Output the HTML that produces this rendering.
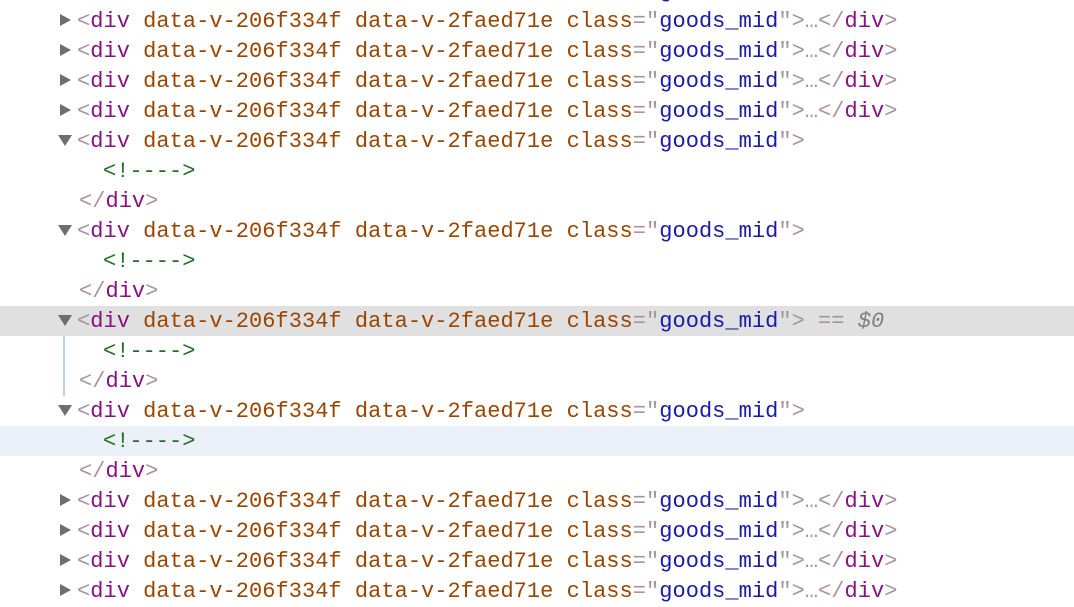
<!DOCTYPE html>
<html><head><meta charset="utf-8"><style>
body{margin:0;background:#fff;width:1074px;height:592px;overflow:hidden;position:relative;font-family:"Liberation Mono","DejaVu Sans Mono",monospace;font-size:22px}
.r{position:absolute;left:0;width:1074px;height:30px;line-height:30px;white-space:pre}
.t{position:absolute;left:77px;top:2px;letter-spacing:0.03px}
.c{position:absolute;left:103px;top:2px}
.g{color:#a8929f}.n{color:#881280}.a{color:#994500}.v{color:#1a1aa6}.m{color:#236e25}.s{color:#808080;font-style:italic}
.tri{position:absolute;left:60px;top:9px;width:0;height:0}
.rt{border-top:6.5px solid transparent;border-bottom:6.5px solid transparent;border-left:11px solid #6e6e6e}
.dn{left:58px;top:10px;border-left:7px solid transparent;border-right:7px solid transparent;border-top:11px solid #6e6e6e}
</style></head><body>
<div style="position:absolute;left:0;top:306px;width:1074px;height:30px;background:#e0e0e0"></div>
<div style="position:absolute;left:0;top:426px;width:1074px;height:30px;background:#ebf0f9"></div>
<div style="position:absolute;left:63px;top:336px;width:2px;height:60px;background:#b9cdef"></div>
<div id="c"></div>
<script>
var o='<span class="g">&lt;</span><span class="n">div</span> <span class="a">data-v-206f334f</span> <span class="a">data-v-2faed71e</span> <span class="a">class</span><span class="g">="</span><span class="v">goods_mid</span><span class="g">"&gt;</span>';
var col=o+'<span class="g">…&lt;/</span><span class="n">div</span><span class="g">&gt;</span>';
var cm='<span class="m">&lt;!----&gt;</span>';
var cl='<span class="g">&lt;/</span><span class="n">div</span><span class="g">&gt;</span>';
var rows=[['r',col],['r',col],['r',col],['r',col],['r',col],['d',o],['k',cm],['e',cl],['d',o],['k',cm],['e',cl],['d',o+' <span class="g">==</span> <span class="s">$0</span>'],['k',cm],['e',cl],['d',o],['k',cm],['e',cl],['r',col],['r',col],['r',col],['r',col]];
var h='';
rows.forEach(function(x,i){var top=-25+30*i;var tri=x[0]=='r'?'<div class="tri rt"></div>':x[0]=='d'?'<div class="tri dn"></div>':'';
var cls=x[0]=='k'?'c':'t';var st=x[0]=='e'?' style="left:79px"':'';
h+='<div class="r" style="top:'+top+'px">'+tri+'<div class="'+cls+'"'+st+'>'+x[1]+'</div></div>';});
document.getElementById('c').innerHTML=h;
</script>
</body></html>
